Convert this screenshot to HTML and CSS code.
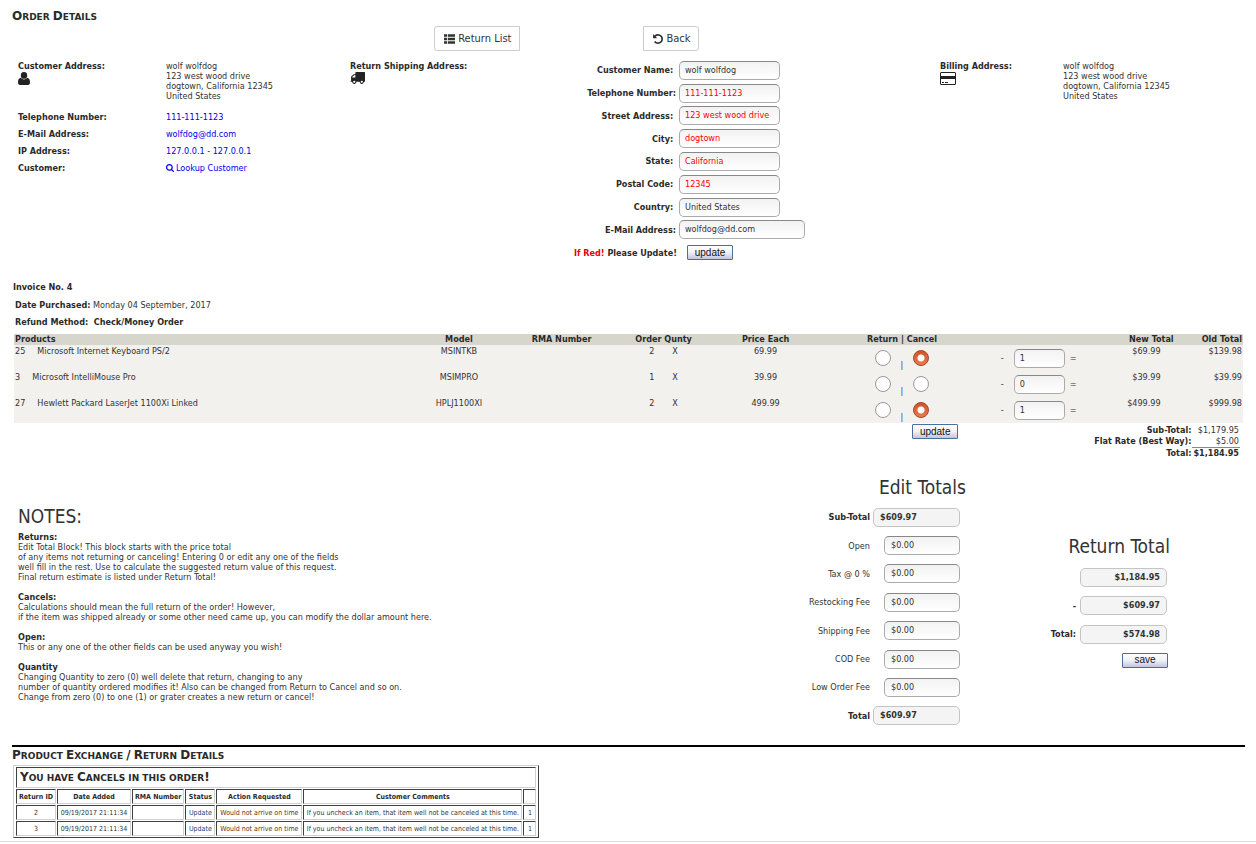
FILE: index.html
```html
<!DOCTYPE html>
<html lang="en">
<head>
<meta charset="utf-8">
<title>Order Details</title>
<link rel="stylesheet" href="styles.css">
</head>
<body>
<main class="page">
  <h1 class="section-title"><span class="cap">O</span>rder <span class="cap">D</span>etails</h1>
  <nav class="toolbar">
    <button type="button" class="tool tool-first"><svg viewBox="0 0 14 12" width="11" height="10" aria-hidden="true"><path d="M0 0h4v3H0zM5 0h9v3H5zM0 4.5h4v3H0zM5 4.5h9v3H5zM0 9h4v3H0zM5 9h9v3H5z"/></svg>Return List</button>
    <button type="button" class="tool tool-last"><svg viewBox="128 128 1536 1536" width="10" height="10" aria-hidden="true"><path d="M1664 896q0 156-61 298t-164 245-245 164-298 61q-172 0-327-72.5t-264-204.5q-7-10-6.5-22.5t8.5-20.5l137-138q10-9 25-9 16 2 23 12 73 95 179 147t225 52q104 0 198.5-40.5t163.5-109.5 109.5-163.5 40.5-198.5-40.5-198.5-109.5-163.5-163.5-109.5-198.5-40.5q-98 0-188 35.5t-160 101.5l137 138q31 30 14 69-17 40-59 40h-448q-26 0-45-19t-19-45v-448q0-42 40-59 39-17 69 14l130 129q107-101 244.5-156.5t284.5-55.5q156 0 298 61t245 164 164 245 61 298z"/></svg>Back</button>
  </nav>

  <section class="addresses">
    <dl class="customer">
      <dt>Customer Address:<svg class="icon" viewBox="0 0 12 13" width="12" height="13" aria-hidden="true"><ellipse cx="6" cy="3.4" rx="3.2" ry="3.4"/><path d="M2.9 5.8C4.6 7.9 7.4 7.9 9.1 5.8 11 6 12 7.600 12 10.600 12 12.200 11.200 13 10 13H2C.8 13 0 12.200 0 10.600 0 7.600 1 6 2.900 5.800z"/></svg></dt>
      <dd class="address">wolf wolfdog<br>123 west wood drive<br>dogtown, California 12345<br>United States</dd>
      <dt>Telephone Number:</dt><dd><a href="#tel">111-111-1123</a></dd>
      <dt>E-Mail Address:</dt><dd><a href="#mail">wolfdog@dd.com</a></dd>
      <dt>IP Address:</dt><dd><a href="#ip">127.0.0.1 - 127.0.0.1</a></dd>
      <dt>Customer:</dt><dd><a href="#lookup"><svg class="lookup" viewBox="64 128 1664 1664" width="8" height="8" aria-hidden="true"><path d="M1216 832q0-185-131.5-316.5t-316.5-131.5-316.5 131.5-131.5 316.5 131.5 316.5 316.5 131.5 316.5-131.5 131.5-316.5zm512 832q0 52-38 90t-90 38q-54 0-90-38l-343-342q-179 124-399 124-143 0-273.5-55.5t-225-150-150-225-55.5-273.5 55.5-273.5 150-225 225-150 273.5-55.5 273.5 55.5 225 150 150 225 55.5 273.5q0 220-124 399l343 343q37 37 37 90z"/></svg>Lookup Customer</a></dd>
    </dl>
    <div class="shipping"><b>Return Shipping Address:</b><svg class="icon" viewBox="0 256 1792 1408" width="15" height="12" aria-hidden="true"><path d="M640 1408q0-52-38-90t-90-38-90 38-38 90 38 90 90 38 90-38 38-90zm-384-512h384v-256h-158q-13 0-22 9l-195 195q-9 9-9 22v30zm1280 512q0-52-38-90t-90-38-90 38-38 90 38 90 90 38 90-38 38-90zm256-1088v1024q0 15-4 26.5t-13.5 18.5-16.5 11.5-23.5 6-22.5 2-25.5 0-22.5-.5q0 106-75 181t-181 75-181-75-75-181h-384q0 106-75 181t-181 75-181-75-75-181h-64q-3 0-22.5.5t-25.5 0-22.5-2-23.5-6-16.5-11.5-13.5-18.5-4-26.5q0-26 19-45t45-19v-320q0-8-.5-35t0-38 2.5-34.5 6.5-37 14-30.5 22.5-30l198-198q19-19 50.5-32t58.5-13h160v-192q0-26 19-45t45-19h1024q26 0 45 19t19 45z"/></svg></div>
    <form class="contact">
      <label for="name">Customer Name:&nbsp;</label><input class="field" id="name" value="wolf wolfdog">
      <label for="phone">Telephone Number:</label><input class="field stale" id="phone" value="111-111-1123">
      <label for="street">Street Address:&nbsp;</label><input class="field stale" id="street" value="123 west wood drive">
      <label for="city">City:&nbsp;</label><input class="field stale" id="city" value="dogtown">
      <label for="state">State:&nbsp;</label><input class="field stale" id="state" value="California">
      <label for="zip">Postal Code:&nbsp;</label><input class="field stale" id="zip" value="12345">
      <label for="country">Country:&nbsp;</label><input class="field" id="country" value="United States">
      <label for="email">E-Mail Address:</label><input class="field wide" id="email" value="wolfdog@dd.com">
      <b><span class="warn">If Red!</span> Please Update!</b><button type="button" class="push contact-update">update</button>
    </form>
    <div class="billing"><b>Billing Address:</b><svg class="icon" viewBox="0 0 16 13" width="16" height="13" aria-hidden="true"><path fill-rule="evenodd" d="M1 0h14l1 1v11l-1 1H1l-1-1V1zM1 1v3h14V1zM1 7v5h14V7zM2 10h2v1H2zM5 10h3v1H5z"/></svg></div>
    <div>wolf wolfdog<br>123 west wood drive<br>dogtown, California 12345<br>United States</div>
  </section>

  <section class="invoice">
    <b class="invoice-number">Invoice No. 4</b>
    <p><b>Date Purchased:</b> Monday 04 September, 2017</p>
    <p><b>Refund Method:&nbsp; Check/Money Order</b></p>
  </section>

  <table class="products">
    <colgroup><col class="c-product"><col class="c-model"><col class="c-rma"><col class="c-order"><col class="c-price"><col class="c-choice"><col class="c-quantity"><col class="c-new"><col class="c-old"></colgroup>
    <thead><tr><th class="left">Products</th><th>Model</th><th>RMA Number</th><th>Order Qunty</th><th>Price Each</th><th>Return | Cancel</th><th></th><th class="right">New Total</th><th class="right last">Old Total</th></tr></thead>
    <tbody>
      <tr><td class="left">25<span class="product">Microsoft Internet Keyboard PS/2</span></td><td>MSINTKB</td><td></td><td><span class="count">2</span>X</td><td>69.99</td>
        <td><div class="choice"><input type="radio" name="r1" aria-label="Return"><span>|</span><input type="radio" name="r1" aria-label="Cancel" checked></div></td>
        <td><div class="quantity">-<input class="field" aria-label="Quantity" value="1">=</div></td><td class="right">$69.99</td><td class="right last">$139.98</td></tr>
      <tr><td class="left">3<span class="product">Microsoft IntelliMouse Pro</span></td><td>MSIMPRO</td><td></td><td><span class="count">1</span>X</td><td>39.99</td>
        <td><div class="choice"><input type="radio" name="r2" aria-label="Return"><span>|</span><input type="radio" name="r2" aria-label="Cancel"></div></td>
        <td><div class="quantity">-<input class="field" aria-label="Quantity" value="0">=</div></td><td class="right">$39.99</td><td class="right last">$39.99</td></tr>
      <tr><td class="left">27<span class="product">Hewlett Packard LaserJet 1100Xi Linked</span></td><td>HPLJ1100XI</td><td></td><td><span class="count">2</span>X</td><td>499.99</td>
        <td><div class="choice"><input type="radio" name="r3" aria-label="Return"><span>|</span><input type="radio" name="r3" aria-label="Cancel" checked></div></td>
        <td><div class="quantity">-<input class="field" aria-label="Quantity" value="1">=</div></td><td class="right">$499.99</td><td class="right last">$999.98</td></tr>
    </tbody>
  </table>

  <div class="summary">
    <button type="button" class="push">update</button>
    <table class="order-totals">
      <tr><th>Sub-Total:</th><td>$1,179.95</td></tr>
      <tr><th>Flat Rate (Best Way):</th><td>$5.00</td></tr>
      <tr class="grand"><th>Total:</th><td>$1,184.95</td></tr>
    </table>
  </div>

  <section class="adjust">
    <article class="notes">
      <h2>NOTES:</h2>
      <p><b>Returns:</b><br>Edit Total Block! This block starts with the price total<br>of any items not returning or canceling! Entering 0 or edit any one of the fields<br>well fill in the rest. Use to calculate the suggested return value of this request.<br>Final return estimate is listed under Return Total!</p>
      <p><b>Cancels:</b><br>Calculations should mean the full return of the order! However,<br>if the item was shipped already or some other need came up, you can modify the dollar amount here.</p>
      <p><b>Open:</b><br>This or any one of the other fields can be used anyway you wish!</p>
      <p><b>Quantity</b><br>Changing Quantity to zero (0) well delete that return, changing to any<br>number of quantity ordered modifies it! Also can be changed from Return to Cancel and so on.<br>Change from zero (0) to one (1) or grater creates a new return or cancel!</p>
    </article>
    <form class="edit-totals">
      <h2>Edit Totals</h2>
      <div class="fees">
        <label class="strong" for="subtotal">Sub-Total</label><input class="field fixed" id="subtotal" value="$609.97" readonly>
        <label for="open">Open</label><input class="field" id="open" value="$0.00">
        <label for="tax">Tax @ 0 %</label><input class="field" id="tax" value="$0.00">
        <label for="restock">Restocking Fee</label><input class="field" id="restock" value="$0.00">
        <label for="shipfee">Shipping Fee</label><input class="field" id="shipfee" value="$0.00">
        <label for="cod">COD Fee</label><input class="field" id="cod" value="$0.00">
        <label for="low">Low Order Fee</label><input class="field" id="low" value="$0.00">
        <label class="strong" for="total">Total</label><input class="field fixed" id="total" value="$609.97" readonly>
      </div>
    </form>
    <form class="return-total">
      <h2>Return Total</h2>
      <div class="sums">
        <span></span><input class="field fixed" aria-label="Order total" value="$1,184.95" readonly>
        <label class="strong" for="minus">-</label><input class="field fixed" id="minus" value="$609.97" readonly>
        <label class="strong" for="rtotal">Total:</label><input class="field fixed" id="rtotal" value="$574.98" readonly>
      </div>
      <button type="button" class="push">save</button>
    </form>
  </section>

  <section class="details">
    <h2 class="section-title"><span class="cap">P</span>roduct <span class="cap">E</span>xchange <span class="cap">/</span> <span class="cap">R</span>eturn <span class="cap">D</span>etails</h2>
    <table class="returns">
      <colgroup><col class="r-id"><col class="r-date"><col class="r-rma"><col class="r-status"><col class="r-action"><col class="r-comments"><col class="r-count"></colgroup>
      <thead>
        <tr><th colspan="7" class="returns-title"><span class="section-title"><span class="cap">Y</span>ou have <span class="cap">C</span>ancels in this order<span class="cap">!</span></span></th></tr>
        <tr><th>Return ID</th><th>Date Added</th><th>RMA Number</th><th>Status</th><th>Action Requested</th><th>Customer Comments</th><th></th></tr>
      </thead>
      <tbody>
        <tr><td>2</td><td>09/19/2017 21:11:34</td><td></td><td><a href="#r2">Update</a></td><td class="reason">Would not arrive on time</td><td>If you uncheck an item, that item well not be canceled at this time.</td><td>1</td></tr>
        <tr><td>3</td><td>09/19/2017 21:11:34</td><td></td><td><a href="#r3">Update</a></td><td class="reason">Would not arrive on time</td><td>If you uncheck an item, that item well not be canceled at this time.</td><td>1</td></tr>
      </tbody>
    </table>
  </section>
</main>
<footer class="footer"></footer>
</body>
</html>
```
FILE: styles.css
```css
* { box-sizing: border-box; }

body {
  margin: 0;
  background: #fff;
  color: #333;
  font: 9px/10px "DejaVu Sans Condensed", "DejaVu Sans", sans-serif;
}

.page { padding: 10px 11px 0 12px; }

h1, h2, p, dl, dd { margin: 0; }
b, dt, th, .strong { font-weight: bold; color: #2a2a2a; }
svg { fill: currentColor; }
input, button { font: inherit; color: inherit; margin: 0; }
a { color: #00e; text-decoration: none; }

h2 { font-size: 19px; line-height: 20px; font-weight: normal; }

.section-title {
  font: bold 9px/12px "DejaVu Sans", sans-serif;
  text-transform: uppercase;
  color: #2a2a2a;
}
.cap { font-size: 12px; }

.toolbar {
  display: flex;
  gap: 123px;
  padding: 3px 0 0 calc(34% + 3px);
}

.tool {
  display: flex;
  align-items: center;
  gap: 3px;
  height: 25px;
  padding: 0 8px 0 9px;
  background: #fff;
  border: 1px solid #ccc;
  font-size: 11px;
}
.tool-first { border-radius: 3px 0 0 3px; }
.tool-last { border-radius: 0 3px 3px 0; }

.icon { display: block; margin-top: 1px; color: #222; }

.addresses {
  display: grid;
  grid-template-columns: 332fr 224fr 366fr 123fr 182fr;
  padding: 10px 0 0 6px;
}

.customer {
  display: grid;
  grid-template-columns: 148fr 184fr;
  grid-auto-rows: 17px;
  grid-template-rows: 51px;
}
.lookup { margin: 0 2px -1px 0; }

.contact {
  display: grid;
  grid-template-columns: 102px 1fr;
  grid-template-rows: repeat(9, 1fr);
  column-gap: 3px;
  align-items: center;
  min-height: 205px;
  margin-top: -2px;
}
.contact > label, .contact > b {
  text-align: right;
  font-weight: bold;
  color: #2a2a2a;
  white-space: nowrap;
}
.contact > .contact-update { margin-left: 8px; }
.contact .field { width: 101px; }
.contact .wide { width: 126px; }
.contact .stale { color: #f00; }
.warn { color: #e00; }

.field {
  height: 19px;
  padding: 0 5px 1px;
  border: 1px solid #aaa;
  border-top-color: #888;
  border-radius: 5px;
  background: linear-gradient(#f2f2f2, #fff);
}
.field.fixed {
  background: #f4f4f4;
  border-color: #c4c4c4;
  font-weight: bold;
}

.push {
  width: 46px;
  height: 15px;
  padding: 0;
  border: 1px solid #4a6f9c;
  border-radius: 1px;
  background: linear-gradient(#fff, #f0f0f8 50%, #c4c4dc);
  color: #111;
  font: 10px/12px "Liberation Sans", sans-serif;
}

.invoice { padding: 18px 3px 7px; }
.invoice-number { display: block; margin: 0 0 8px -2px; }
.invoice p + p { margin-top: 7px; }

.products {
  width: calc(100% - 4px);
  margin: 0 2px;
  table-layout: fixed;
  border-collapse: collapse;
  background: #f2f1ee;
}
.products th, .products td {
  padding: 0 1px;
  text-align: center;
  vertical-align: top;
}
.products thead { background: #d6d6cc; }
.products th { height: 11px; }
.products td { height: 26px; padding-top: 1px; }
.products .left { text-align: left; }
.products .right { text-align: right; }
.products th.right { padding-right: 3px; }
.products td.right { padding-right: 16px; }
.products .right.last { padding-right: 1px; }
.c-model { width: 9.6%; }
.c-order { width: 9.5%; }
.c-rma, .c-price { width: 7.1%; }
.c-choice { width: 15.1%; }
.c-quantity { width: 7%; }
.c-new { width: 7.8%; }
.c-old { width: 5.4%; }
.product { margin-left: 12px; }
.count { margin-right: 18px; }

.choice {
  display: flex;
  justify-content: center;
  align-items: center;
  gap: 10px;
  height: 24px;
}
.choice span { align-self: flex-end; color: #336; }
.choice input {
  appearance: none;
  width: 16px;
  height: 16px;
  border: 1px solid #999;
  border-radius: 50%;
  background: #fff;
}
.choice input:checked {
  border-color: #a9472a;
  background: radial-gradient(circle, #fff 3px, transparent 4px), linear-gradient(#cf5227, #e67c50);
}

.quantity {
  display: flex;
  align-items: center;
  gap: 5px;
  height: 24px;
  padding-left: 5px;
}
.quantity .field { width: 51px; margin-left: 5px; }

.summary {
  display: flex;
  justify-content: flex-end;
  align-items: flex-start;
  gap: 135px;
  padding: 1px 5px 0 0;
}
.order-totals { border-spacing: 0; margin-top: 1px; }
.order-totals th, .order-totals td {
  padding: 0 1px;
  text-align: right;
  line-height: 11px;
}
.grand td {
  border-top: 1px solid #888;
  font-weight: bold;
  color: #2a2a2a;
}

.adjust {
  display: grid;
  grid-template-columns: 784fr 170fr 279fr;
  align-items: center;
  padding: 18px 0 15px;
}
.notes { padding-left: 6px; }
.notes h2 { margin-bottom: 6px; }
.notes p + p { margin-top: 10px; }

.edit-totals h2 { margin-bottom: 6px; text-align: right; }
.fees {
  display: grid;
  grid-template-columns: 1fr 87px;
  grid-template-rows: repeat(8, 1fr);
  gap: 0 3px;
  align-items: center;
  justify-items: end;
  min-height: 227px;
  padding-right: 6px;
}
.fees .field { width: 76px; padding: 0 6px 1px; }
.fees .fixed { width: 87px; }

.return-total {
  display: grid;
  justify-items: end;
  padding: 0 78px 4px 0;
}
.return-total h2 { margin: 0 -3px 8px 0; }
.sums {
  display: grid;
  grid-template-columns: auto 87px;
  grid-template-rows: repeat(3, 1fr);
  gap: 0 4px;
  align-items: center;
  justify-items: end;
  min-height: 85px;
}
.sums .field { width: 87px; padding: 0 6px 1px; text-align: right; }
.return-total .push { margin: 4px -1px 0 0; }

.details {
  padding-top: 2px;
  border-top: 2px solid #000;
}
.returns {
  margin: 3px 0 0 1px;
  padding: 0 1px;
  border: 1px solid;
  border-color: #d0d0d0 #404040 #404040 #d0d0d0;
  border-spacing: 1px;
  font-size: 7px;
  line-height: 8px;
}
.r-id { width: 40px; }
.r-date { width: 74px; }
.r-rma { width: 52px; }
.r-status { width: 30px; }
.r-action { width: 86px; }
.r-comments { width: 219px; }
.r-count { width: 13px; }
.returns th, .returns td {
  height: 15px;
  padding: 0 2px;
  border: 1px solid;
  border-color: #404040 #d0d0d0 #d0d0d0 #404040;
  text-align: center;
  white-space: nowrap;
}
.returns th.returns-title {
  height: 21px;
  padding: 0 3px;
  text-align: left;
}
.returns a { color: #147; }
.returns .reason { color: #631; }

.footer { margin-top: 3px; border-top: 1px solid #ddd; }
```
